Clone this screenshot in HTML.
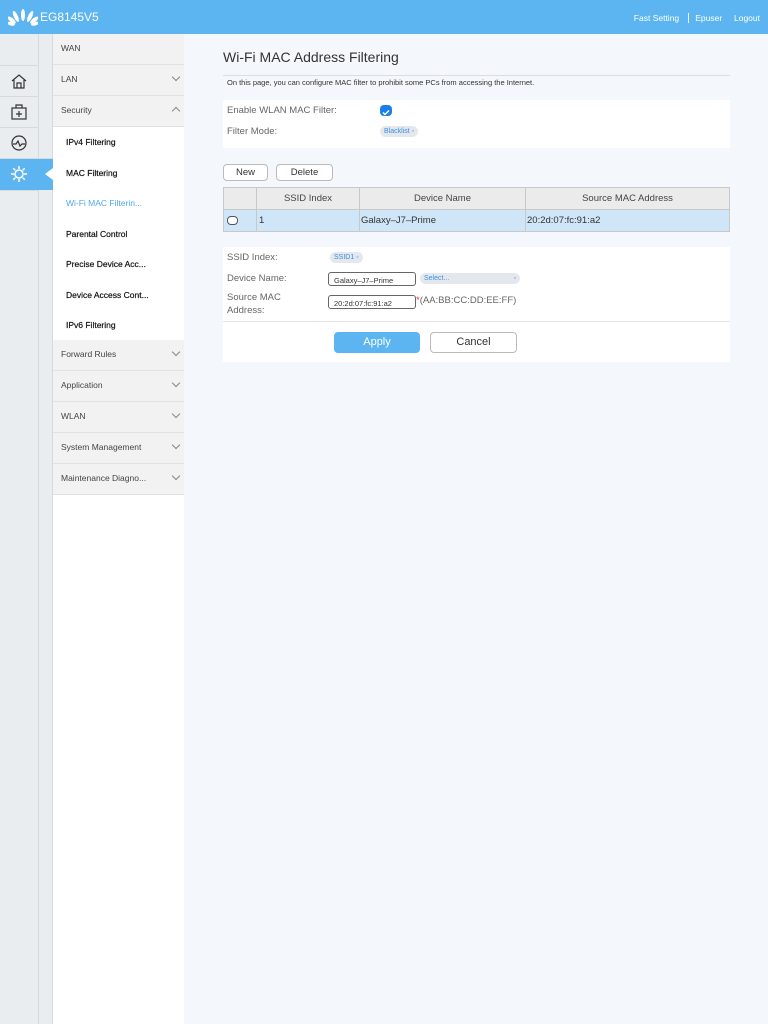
<!DOCTYPE html><html><head><style>
*{margin:0;padding:0;box-sizing:border-box}
body{width:768px;height:1024px;background:#f4f7fb;font-family:"Liberation Sans",sans-serif;position:relative;overflow:hidden;color:#333}
.top{position:absolute;left:0;top:0;width:768px;height:34px;background:#5cb5f1}
.top .t{position:absolute;left:40px;top:10px;color:#fff;font-size:12px}
.top .r{position:absolute;right:8px;top:13px;color:#fff;font-size:8.5px}
.icol{position:absolute;left:0;top:34px;width:53px;height:990px;background:#e9edf0;border-right:1px solid #d5dadf}
.icol:before{content:"";position:absolute;left:38px;top:0;width:1px;height:990px;background:#d5dadf}
.ic{position:absolute;left:0;width:38px;height:31px;border-top:1px solid #d5dadf}
.menu{position:absolute;left:53px;top:34px;width:131px;height:990px;background:#fff}
.m{position:absolute;left:0;width:131px;height:31px;background:#f2f2f2;border-bottom:1px solid #e2e2e2;font-size:8.5px;color:#444;padding:9px 0 0 8px}
.m .c{position:absolute;right:5px;top:9px;width:6px;height:6px;border-right:1px solid #888;border-bottom:1px solid #888;transform:rotate(45deg)}
.m .u{transform:rotate(225deg);top:12px}
.s{position:absolute;left:13px;font-size:8.5px;color:#111;-webkit-text-stroke:0.2px #111}
.card{position:absolute;background:#fff}
.lbl{position:absolute;font-size:9.5px;color:#666}
.btn{position:absolute;border:1px solid #bbb;border-radius:4px;background:#fff;font-size:9.5px;text-align:center}
.sel{position:absolute;background:#e4e8ec;border-radius:6px;font-size:7px;color:#3a8ee6;padding:2px 4px}
.inp{position:absolute;border:1px solid #666;border-radius:3px;background:#fff;font-size:7.5px;padding:3px 5px;height:14px}
table{position:absolute;left:223px;top:187px;width:507px;border-collapse:collapse;font-size:9.5px}
td{border:1px solid #c8c8c8;height:22px}
</style></head><body>
<div class="top">
<svg style="position:absolute;left:8px;top:9px" width="30" height="17" viewBox="0 0 30 17"><g fill="#fff"><ellipse cx="15" cy="6" rx="2" ry="6"/><ellipse cx="10" cy="7" rx="2" ry="6" transform="rotate(-25 10 12)"/><ellipse cx="20" cy="7" rx="2" ry="6" transform="rotate(25 20 12)"/><ellipse cx="6" cy="10" rx="2" ry="5" transform="rotate(-50 6 13)"/><ellipse cx="24" cy="10" rx="2" ry="5" transform="rotate(50 24 13)"/><ellipse cx="4" cy="14" rx="1.8" ry="4" transform="rotate(-75 4 15)"/><ellipse cx="26" cy="14" rx="1.8" ry="4" transform="rotate(75 26 15)"/></g></svg>
<div class="t">EG8145V5</div>
<div class="r">Fast Setting &nbsp;<span style="border-left:1px solid #fff;margin:0 4px"></span>&nbsp;Epuser &nbsp;&nbsp;&nbsp; Logout</div>
</div>
<div class="icol">
<div class="ic" style="top:31px"></div><div class="ic" style="top:62px"></div><div class="ic" style="top:93px"></div>
<div class="ic" style="top:124px;background:#5cb5f1;width:53px;height:32px"></div>
<div class="ic" style="top:156px"></div>
<svg style="position:absolute;left:10px;top:38px" width="18" height="18" viewBox="0 0 18 18" fill="none" stroke="#333" stroke-width="1.2"><path d="M2 9L9 3l7 6M4 8v8h10V8M7 16v-5h4v5"/></svg>
<svg style="position:absolute;left:10px;top:69px" width="18" height="18" viewBox="0 0 18 18" fill="none" stroke="#333" stroke-width="1.2"><rect x="2" y="5" width="14" height="11"/><path d="M6 5V2h6v3M9 8v6M6 11h6"/></svg>
<svg style="position:absolute;left:10px;top:100px" width="18" height="18" viewBox="0 0 18 18" fill="none" stroke="#333" stroke-width="1.2"><circle cx="9" cy="9" r="7"/><path d="M3 10h3l2-3 2 5 2-2h3"/></svg>
<svg style="position:absolute;left:10px;top:131px" width="18" height="18" viewBox="0 0 18 18" fill="none" stroke="#fff" stroke-width="1.5"><circle cx="9" cy="9" r="4"/><path d="M9 1v3M9 14v3M1 9h3M14 9h3M3.3 3.3l2 2M12.7 12.7l2 2M3.3 14.7l2-2M12.7 5.3l2-2"/></svg>
<div style="position:absolute;left:45px;top:134px;width:0;height:0;border-top:6px solid transparent;border-bottom:6px solid transparent;border-right:8px solid #fff"></div>
</div>
<div class="menu">
<div class="m" style="top:0">WAN</div>
<div class="m" style="top:31px">LAN<span class="c"></span></div>
<div class="m" style="top:62px">Security<span class="c u"></span></div>
<div class="s" style="top:103px">IPv4 Filtering</div>
<div class="s" style="top:134px">MAC Filtering</div>
<div class="s" style="top:164px;color:#4aa8ee;-webkit-text-stroke:0">Wi-Fi MAC Filterin...</div>
<div class="s" style="top:195px">Parental Control</div>
<div class="s" style="top:225px">Precise Device Acc...</div>
<div class="s" style="top:256px">Device Access Cont...</div>
<div class="s" style="top:286px">IPv6 Filtering</div>
<div class="m" style="top:306px">Forward Rules<span class="c"></span></div>
<div class="m" style="top:337px">Application<span class="c"></span></div>
<div class="m" style="top:368px">WLAN<span class="c"></span></div>
<div class="m" style="top:399px">System Management<span class="c"></span></div>
<div class="m" style="top:430px">Maintenance Diagno...<span class="c"></span></div>
</div>
<div style="position:absolute;left:223px;top:49px;font-size:14px;color:#333">Wi-Fi MAC Address Filtering</div>
<div style="position:absolute;left:223px;top:75px;width:507px;border-top:1px solid #ddd"></div>
<div style="position:absolute;left:227px;top:78px;font-size:7.5px;color:#333">On this page, you can configure MAC filter to prohibit some PCs from accessing the Internet.</div>
<div class="card" style="left:223px;top:100px;width:507px;height:48px"></div>
<div class="lbl" style="left:227px;top:105px">Enable WLAN MAC Filter:</div>
<div style="position:absolute;left:380px;top:105px;width:12px;height:11px;border-radius:4px;background:#1a7fe8"><svg width="12" height="11"><path d="M3 5.5l2 2 4-4" stroke="#fff" stroke-width="1.5" fill="none"/></svg></div>
<div class="lbl" style="left:227px;top:126px">Filter Mode:</div>
<div class="sel" style="left:380px;top:126px">Blacklist ◦</div>
<div class="btn" style="left:223px;top:164px;width:45px;height:17px;padding-top:2px">New</div>
<div class="btn" style="left:276px;top:164px;width:57px;height:17px;padding-top:2px">Delete</div>
<table><tr style="background:#ebebeb;color:#444;text-align:center"><td style="width:33px"></td><td style="width:103px">SSID Index</td><td style="width:166px">Device Name</td><td>Source MAC Address</td></tr>
<tr style="background:#cfe6f9"><td><div style="margin-left:3px;width:11px;height:9px;border:1px solid #555;border-radius:4px;background:#fff"></div></td><td style="padding-left:2px">1</td><td style="padding-left:1px">Galaxy–J7–Prime</td><td style="padding-left:1px">20:2d:07:fc:91:a2</td></tr></table>
<div class="card" style="left:223px;top:247px;width:507px;height:115px"></div>
<div style="position:absolute;left:223px;top:321px;width:507px;border-top:1px solid #e5e5e5"></div>
<div class="lbl" style="left:227px;top:252px">SSID Index:</div>
<div class="sel" style="left:330px;top:252px">SSID1 ◦</div>
<div class="lbl" style="left:227px;top:273px">Device Name:</div>
<div class="inp" style="left:328px;top:272px;width:88px">Galaxy–J7–Prime</div>
<div class="sel" style="left:420px;top:273px;width:100px">Select... <span style="float:right">◦</span></div>
<div class="lbl" style="left:227px;top:291px;line-height:13px">Source MAC<br>Address:</div>
<div class="inp" style="left:328px;top:295px;width:88px">20:2d:07:fc:91:a2</div>
<div class="lbl" style="left:416px;top:295px"><span style="color:#e33">*</span>(AA:BB:CC:DD:EE:FF)</div>
<div class="btn" style="left:334px;top:332px;width:86px;height:21px;background:#5cb5f1;border-color:#5cb5f1;color:#fff;font-size:11px;padding-top:3px">Apply</div>
<div class="btn" style="left:430px;top:332px;width:87px;height:21px;font-size:11px;padding-top:3px">Cancel</div>
</body></html>
